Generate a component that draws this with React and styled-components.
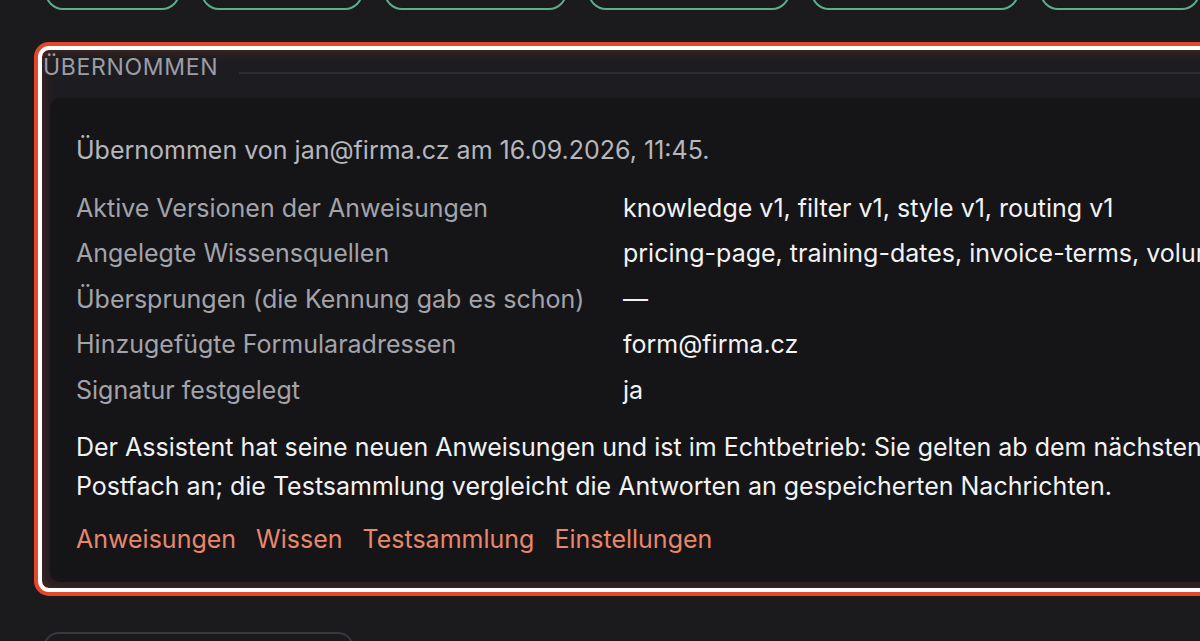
import React from "react";
import styled, { createGlobalStyle } from "styled-components";

const GlobalStyle = createGlobalStyle`
  html, body {
    margin: 0;
    padding: 0;
    background: #1b1b1e;
    overflow: hidden;
  }
  body {
    font-family: Inter, "Noto Sans", "Liberation Sans", sans-serif;
    color: #ececee;
  }
`;

const Page = styled.div`
  width: 1300px;
  padding: 0 0 0 42px;
  box-sizing: border-box;
`;

const PillRow = styled.div`
  display: flex;
  gap: 21px;
  margin: -34px 0 0 3px;
`;

const Pill = styled.button`
  flex: 0 0 ${({ $w }) => $w}px;
  height: 44px;
  box-sizing: border-box;
  border: 2px solid #5dae8a;
  border-radius: 18px;
  background: transparent;
`;

const Section = styled.section`
  margin-top: 40px;
  padding: 0 0 6px 0;
  border-radius: 7px;
  background: #1d1d21;
  outline: 4px solid #ffffff;
  box-shadow: 0 0 0 8px #e2482c, inset 0 0 14px rgba(226, 72, 44, 0.28);
`;

const Heading = styled.div`
  display: flex;
  align-items: flex-start;
  gap: 21px;
  height: 48px;

  & h2 {
    margin: 2px 0 0 1px;
    font-size: 23px;
    font-weight: 400;
    letter-spacing: 0.03em;
    text-transform: uppercase;
    color: #9d9da5;
    line-height: 30px;
  }

  &::after {
    content: "";
    flex: 1;
    height: 2px;
    margin-top: 22px;
    background: #2d2d33;
  }
`;

const Card = styled.div`
  margin: 0 0 0 8px;
  padding: 35px 26px 26px;
  background: #151517;
  border-radius: 10px;
  font-size: 25px;
`;

const Lead = styled.p`
  margin: 0;
  line-height: 34px;
  color: #b6b6bd;
`;

const Facts = styled.dl`
  display: grid;
  grid-template-columns: 547px 1fr;
  row-gap: 11.4px;
  margin: 24px 0 0;
  line-height: 34px;
  white-space: nowrap;

  & dt {
    color: #a3a3aa;
  }
  & dd {
    margin: 0;
    color: #f2f2f4;
  }
`;

const Note = styled.p`
  margin: 21.5px 0 0;
  line-height: 39px;
  color: #f2f2f4;
  white-space: nowrap;
`;

const Links = styled.nav`
  display: flex;
  gap: 20px;
  margin-top: 16px;
  line-height: 34px;
`;

const LinkItem = styled.a`
  color: #e8876b;
  text-decoration: none;
  cursor: pointer;
`;

const NextBox = styled.div`
  margin: 44px 0 0 1px;
  width: 307px;
  height: 60px;
  border: 2px solid #38383f;
  border-radius: 16px;
`;

const pills = [135, 162, 183, 202, 208, 160];

const facts = [
  ["Aktive Versionen der Anweisungen", "knowledge v1, filter v1, style v1, routing v1"],
  ["Angelegte Wissensquellen", "pricing-page, training-dates, invoice-terms, volume-discounts"],
  ["Übersprungen (die Kennung gab es schon)", "—"],
  ["Hinzugefügte Formularadressen", "form@firma.cz"],
  ["Signatur festgelegt", "ja"],
];

export default function App() {
  return (
    <>
      <GlobalStyle />
      <Page>
        <PillRow>
          {pills.map((w, i) => (
            <Pill key={i} $w={w} />
          ))}
        </PillRow>
        <Section>
          <Heading>
            <h2>Übernommen</h2>
          </Heading>
          <Card>
            <Lead>Übernommen von jan@firma.cz am 16.09.2026, 11:45.</Lead>
            <Facts>
              {facts.map(([k, v]) => (
                <React.Fragment key={k}>
                  <dt>{k}</dt>
                  <dd>{v}</dd>
                </React.Fragment>
              ))}
            </Facts>
            <Note>
              Der Assistent hat seine neuen Anweisungen und ist im Echtbetrieb: Sie gelten ab dem nächsten Eingang im
              <br />
              Postfach an; die Testsammlung vergleicht die Antworten an gespeicherten Nachrichten.
            </Note>
            <Links>
              <LinkItem>Anweisungen</LinkItem>
              <LinkItem>Wissen</LinkItem>
              <LinkItem>Testsammlung</LinkItem>
              <LinkItem>Einstellungen</LinkItem>
            </Links>
          </Card>
        </Section>
        <NextBox />
      </Page>
    </>
  );
}
